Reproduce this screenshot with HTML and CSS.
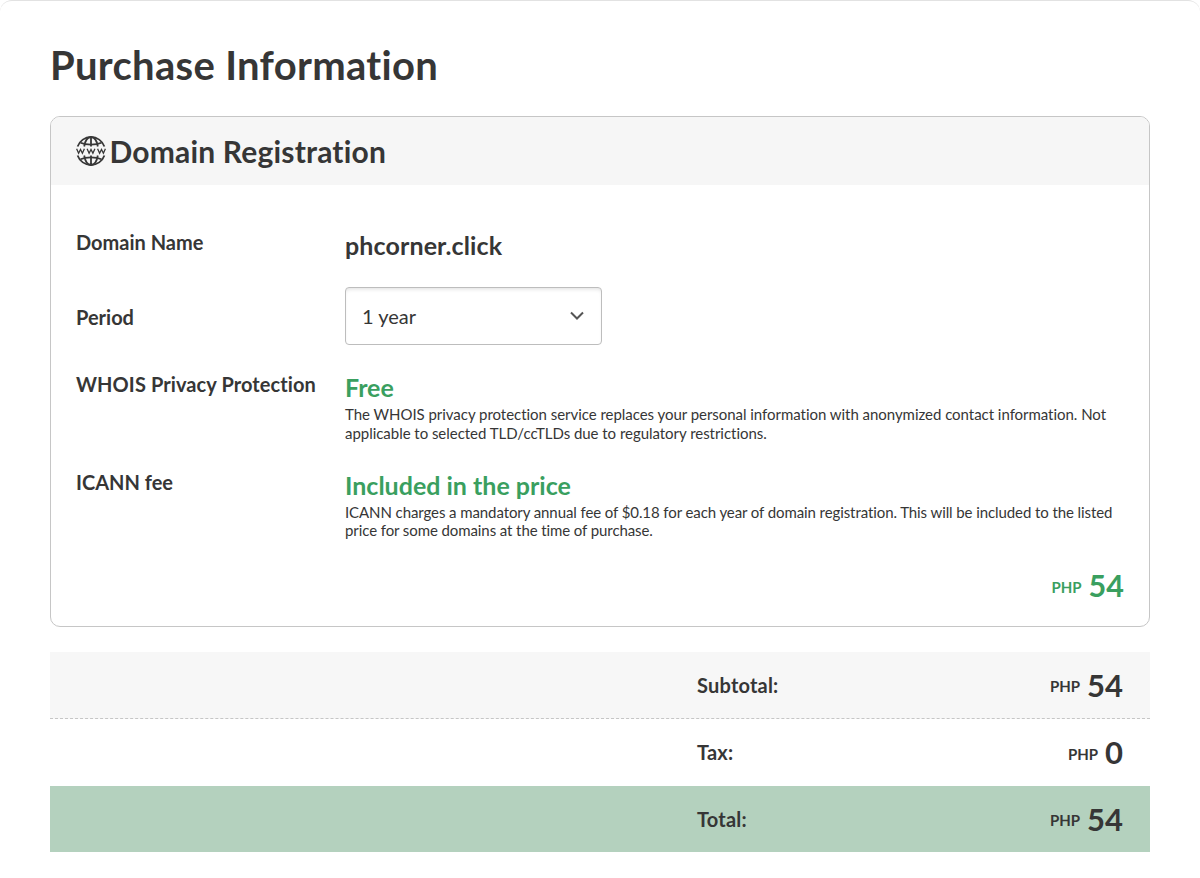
FILE: index.html
```html
<!DOCTYPE html>
<html lang="en">
<head>
<meta charset="utf-8">
<title>Purchase Information</title>
<link rel="stylesheet" href="styles.css">
</head>
<body>
<main class="panel">
  <h1 class="title">Purchase Information</h1>
  <section class="card">
    <header class="card-head">
      <svg class="globe" viewBox="0 0 30 30" fill="none" stroke="#383838" stroke-width="1.8">
        <path d="M1.600 10.500A14.200 14.200 0 0 1 28.400 10.500M1.600 19.500A14.200 14.200 0 0 0 28.400 19.500"/>
        <path d="M15 1v9.500M15 19.500V29M8.200 10.500C9.200 4.500 11.600 1 15 1s5.800 3.500 6.800 9.500M8.200 19.500c1 6 3.400 9.500 6.800 9.500s5.800-3.500 6.800-9.500"/>
        <path d="M4.500 6.800c5.500 2.400 15.500 2.400 21 0M4.500 23.200c5.500-2.400 15.500-2.400 21 0"/>
        <path d="M.6 12.800l2 4.400 1.900-3.800 1.900 3.800 2-4.400M11.100 12.800l2 4.400 1.900-3.800 1.900 3.800 2-4.400M21.600 12.800l2 4.400 1.900-3.800 1.900 3.800 2-4.400" stroke-width="1.300"/>
      </svg>
      <h2 class="card-title">Domain Registration</h2>
    </header>
    <div class="card-body">
      <div class="row row-name">
        <div class="label">Domain Name</div>
        <div class="value">phcorner.click</div>
      </div>
      <div class="row row-period">
        <div class="label">Period</div>
        <div class="select"><span>1 year</span>
          <svg class="chevron" viewBox="0 0 14 9" fill="none" stroke="#555" stroke-width="2"><path d="M1 1.500l6 6 6-6"/></svg>
        </div>
      </div>
      <div class="row row-whois">
        <div class="label">WHOIS Privacy Protection</div>
        <div>
          <div class="value green">Free</div>
          <p class="note">The WHOIS privacy protection service replaces your personal information with anonymized contact information. Not applicable to selected TLD/ccTLDs due to regulatory restrictions.</p>
        </div>
      </div>
      <div class="row row-icann">
        <div class="label">ICANN fee</div>
        <div>
          <div class="value green">Included in the price</div>
          <p class="note">ICANN charges a mandatory annual fee of $0.18 for each year of domain registration. This will be included to the listed price for some domains at the time of purchase.</p>
        </div>
      </div>
      <div class="price green"><span class="currency">PHP</span><span class="amount">54</span></div>
    </div>
  </section>
  <section class="totals">
    <div class="total-row subtotal"><span class="label">Subtotal:</span><div class="price"><span class="currency">PHP</span><span class="amount">54</span></div></div>
    <div class="total-row tax"><span class="label">Tax:</span><div class="price"><span class="currency">PHP</span><span class="amount">0</span></div></div>
    <div class="total-row grand"><span class="label">Total:</span><div class="price"><span class="currency">PHP</span><span class="amount">54</span></div></div>
  </section>
</main>
</body>
</html>
```
FILE: styles.css
```css
* { box-sizing: border-box; }
body { margin: 0; background: #fff; color: #363636; font-family: Lato, sans-serif; font-variant-ligatures: none; }
h1, h2, p { margin: 0; }
.panel { height: 878px; padding: 40px 50px 0; border-top: 1px solid #e2e2e2; border-radius: 12px; }
.title { height: 75px; font-size: 40px; line-height: 48px; font-weight: 700; letter-spacing: .31px; }
.card { height: 511px; border: 1px solid #c6c6c6; border-radius: 10px; overflow: hidden; }
.card-head { height: 68px; padding: 0 25px; background: #f6f6f6; display: flex; align-items: center; gap: 3.500px; }
.globe { width: 30px; height: 30px; }
.card-title { font-size: 30px; line-height: 36px; font-weight: 700; letter-spacing: .18px; }
.card-body { padding: 43px 25px 0; }
.row { display: grid; grid-template-columns: 269px 1fr; }
.row-name { height: 59px; }
.row-name .value { letter-spacing: .12px; }
.row-period { height: 83px; }
.row-period .label { padding-top: 16px; }
.row-whois, .row-icann { height: 98px; }
.row-whois .label { letter-spacing: .09px; }
.label { font-size: 20px; line-height: 28px; font-weight: 700; }
.value { font-size: 25px; line-height: 34px; font-weight: 700; }
.note { padding-top: 1px; font-size: 15px; line-height: 18.500px; letter-spacing: -.036px; }
.row-icann .note { line-height: 18px; letter-spacing: -.09px; }
.green { color: #3a9f5f; }
.select { width: 257px; height: 58px; padding: 0 17.500px 1px 16px; border: 1px solid #bdbdbd; border-radius: 4px; box-shadow: inset 0 3px 4px -2px #ddd; display: flex; align-items: center; justify-content: space-between; font-size: 20px; }
.chevron { width: 14px; height: 9px; }
.card-body > .price { padding-top: 1px; }
.price { display: flex; align-items: center; justify-content: flex-end; gap: 7px; font-weight: 700; }
.currency { font-size: 15px; line-height: 18px; padding-top: 2px; }
.green .currency, .tax .currency { padding-top: 4px; }
.amount { font-size: 31px; line-height: 36px; }
.card-body .amount { font-size: 30.500px; }
.totals { margin-top: 25px; }
.total-row { height: 67px; padding: 0 27px 1px 647px; display: flex; align-items: center; justify-content: space-between; }
.total-row .label { letter-spacing: .2px; }
.subtotal { padding-bottom: 0; background: #f7f7f7; border-bottom: 1px dashed #c6c6c6; }
.grand { height: 66px; padding-bottom: 0; background: #b4d1be; }
```
